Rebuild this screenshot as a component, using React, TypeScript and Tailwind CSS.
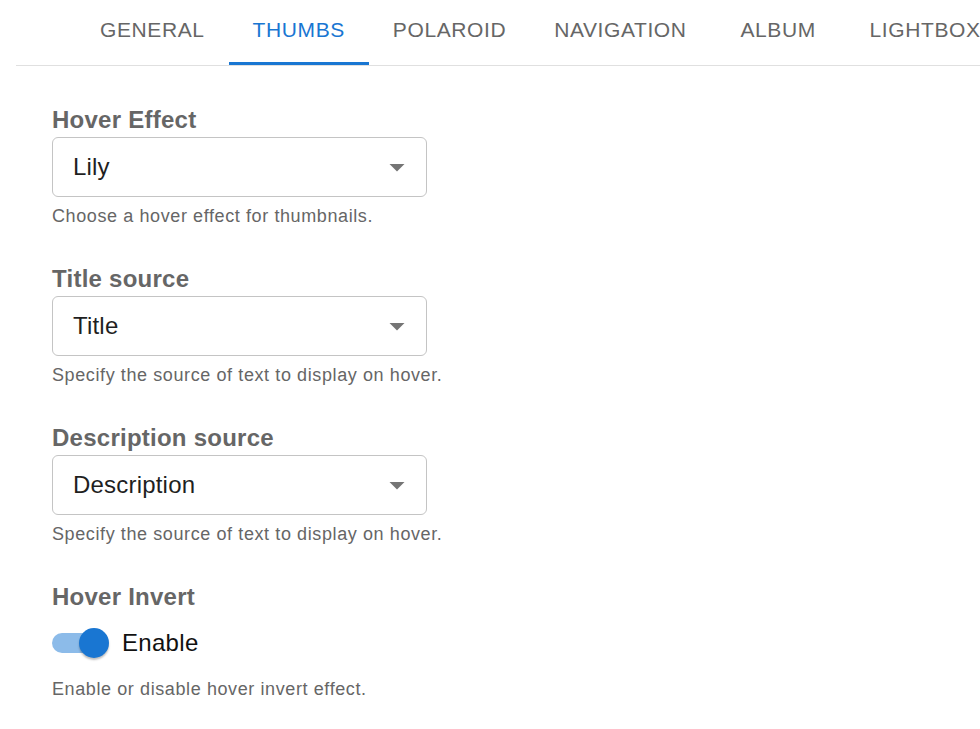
import { useState } from 'react';

const tabs = ['GENERAL', 'THUMBS', 'POLAROID', 'NAVIGATION', 'ALBUM', 'LIGHTBOX'];

// MUI-style dropdown arrow
const IconArrowDrop = () => (
  <svg width="36" height="36" viewBox="0 0 24 24" fill="#757575">
    <path d="M7 10l5 5 5-5z" />
  </svg>
);

type FieldProps = { label: string; value: string; helper: string };

const SelectField = ({ label, value, helper }: FieldProps) => (
  <div className="flex flex-col">
    <div className="text-[24px] leading-[35px] font-bold text-[#666] tracking-[0.25px]">{label}</div>
    <div className="w-[375px] h-[60px] border border-[#c4c4c4] rounded-[6px] flex items-center justify-between pl-[20px] pr-[11px]">
      <span className="text-[24px] leading-[36px] text-[#1f1f1f] tracking-[0.2px]">{value}</span>
      <IconArrowDrop />
    </div>
    <div className="mt-[6px] text-[18px] leading-[27px] text-[#666] tracking-[0.6px]">{helper}</div>
  </div>
);

export default function App() {
  const [active, setActive] = useState(1);
  const [invert, setInvert] = useState(true);

  return (
    <div className="min-h-screen bg-white font-['Liberation_Sans',Arial,sans-serif] overflow-hidden">
      {/* Tabs */}
      <div className="ml-4 flex border-b border-[#e0e0e0] whitespace-nowrap">
        <div className="w-[60px] shrink-0" />
        {tabs.map((t, i) => (
          <button
            key={t}
            onClick={() => setActive(i)}
            className={`relative shrink-0 h-[65px] min-w-[135px] px-[24px] pt-[17px] flex justify-center items-start text-[21px] leading-[26px] tracking-[0.6px] ${
              i === active ? 'text-[#1976d2]' : 'text-[#666]'
            }`}
          >
            {t}
            {i === active && <span className="absolute left-0 right-0 bottom-0 h-[3px] bg-[#1976d2]" />}
          </button>
        ))}
      </div>

      {/* Form */}
      <div className="pl-[52px] pt-[36px] flex flex-col gap-[31px]">
        <SelectField label="Hover Effect" value="Lily" helper="Choose a hover effect for thumbnails." />
        <SelectField label="Title source" value="Title" helper="Specify the source of text to display on hover." />
        <SelectField label="Description source" value="Description" helper="Specify the source of text to display on hover." />

        <div className="flex flex-col">
          <div className="text-[24px] leading-[35px] font-bold text-[#666] tracking-[0.25px]">Hover Invert</div>
          <div className="h-[57px] flex items-center">
            <button onClick={() => setInvert(!invert)} className="relative w-[70px] h-[30px] shrink-0">
              <span
                className={`absolute left-0 top-[5px] w-[51px] h-[20px] rounded-full ${
                  invert ? 'bg-[#8cbbe9]' : 'bg-[#b0b0b0]'
                }`}
              />
              <span
                className={`absolute top-0 w-[30px] h-[30px] rounded-full shadow-[0_2px_2px_rgba(0,0,0,0.25)] ${
                  invert ? 'left-[27px] bg-[#1976d2]' : 'left-[-6px] bg-[#fafafa]'
                }`}
              />
            </button>
            <span className="text-[24px] leading-[36px] text-[#111] tracking-[0.3px]">Enable</span>
          </div>
          <div className="mt-[5px] text-[18px] leading-[27px] text-[#666] tracking-[0.6px]">
            Enable or disable hover invert effect.
          </div>
        </div>
      </div>
    </div>
  );
}
